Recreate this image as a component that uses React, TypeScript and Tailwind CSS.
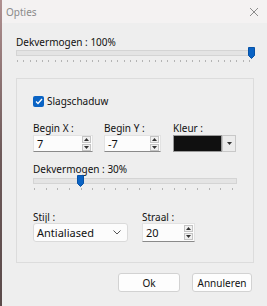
import React from "react";

const font = "font-['Noto_Sans',sans-serif]";
const txt = "text-[10px] leading-[12px] text-[#111111]";

function Thumb() {
  return (
    <svg width="7" height="12" viewBox="0 0 7 12">
      <path d="M0.5 0.5 H6.5 V8.5 L3.5 11.5 L0.5 8.5 Z" fill="#0a63c4" stroke="#0752a6" strokeWidth="1" />
    </svg>
  );
}

function Slider({ ticks, thumbLeft, width }: { ticks: number; thumbLeft: number; width: number }) {
  return (
    <div className="relative h-[16px]" style={{ width }}>
      <div className="absolute left-0 right-0 top-[3px] h-[6px] bg-[#e4e4e4] border border-[#d4d4d4]" />
      <div className="absolute top-0" style={{ left: thumbLeft }}>
        <Thumb />
      </div>
      <div className="absolute left-[1px] right-[4px] top-[13px] flex justify-between">
        {Array.from({ length: ticks }).map((_, i) => (
          <div key={i} className="w-px h-[2px] bg-[#b4b4b4]" />
        ))}
      </div>
    </div>
  );
}

function SpinArrows() {
  return (
    <div className="flex flex-col gap-px">
      <div className="w-[9px] h-[7px] border border-[#c4c4c4] bg-[#f0f0f0] flex items-center justify-center">
        <svg width="5" height="3" viewBox="0 0 5 3"><path d="M0 3 L2.5 0 L5 3 Z" fill="#333" /></svg>
      </div>
      <div className="w-[9px] h-[7px] border border-[#c4c4c4] bg-[#f0f0f0] flex items-center justify-center">
        <svg width="5" height="3" viewBox="0 0 5 3"><path d="M0 0 L2.5 3 L5 0 Z" fill="#333" /></svg>
      </div>
    </div>
  );
}

function Spin({ value, width, height }: { value: string; width: number; height: number }) {
  return (
    <div
      className="bg-[#fcfcfc] border border-[#e2e2e2] border-b-[#8a8a8a] flex items-center justify-between pl-[3px] pr-[1px]"
      style={{ width, height }}
    >
      <span className="text-[11px] leading-none text-[#111111]">{value}</span>
      <SpinArrows />
    </div>
  );
}

export default function App() {
  return (
    <div className={`w-[267px] h-[306px] flex bg-[#eeeeee] overflow-hidden ${font}`}>
      <div className="w-[2px] h-full bg-gradient-to-b from-[#b09090] via-[#6e5a5a] to-[#5a4a4a]" />
      <div className="flex-1 flex flex-col">
        {/* title bar */}
        <div className="h-[23px] flex items-center justify-between bg-[#f4f2f2] pl-[4px] pr-[8px]">
          <span className="text-[10px] text-[#8a8a8a] leading-none">Opties</span>
          <svg width="10" height="10" viewBox="0 0 10 10">
            <path d="M1 1 L9 9 M9 1 L1 9" stroke="#8c8c8c" strokeWidth="1" />
          </svg>
        </div>
        {/* body */}
        <div className="flex-1 flex flex-col pl-[14px] pr-[12px] pt-[13px]">
          <div className={txt}>Dekvermogen : 100%</div>
          <div className="mt-[-1px]">
            <Slider ticks={38} thumbLeft={232} width={238} />
          </div>
          {/* group box */}
          <div className="mt-[15px] w-[238px] h-[185px] border border-[#dcdcdc] flex flex-col pl-[16px] pt-[16px]">
            <div className="flex items-center gap-[3px]">
              <div className="w-[11px] h-[11px] rounded-[2px] bg-[#0a63c4] flex items-center justify-center">
                <svg width="8" height="7" viewBox="0 0 8 7"><path d="M1 3.5 L3 5.5 L7 1" stroke="white" strokeWidth="1.3" fill="none" /></svg>
              </div>
              <span className={txt}>Slagschaduw</span>
            </div>
            <div className="flex mt-[15px]">
              <div className="flex flex-col gap-[1px] w-[71px]">
                <span className={txt}>Begin X :</span>
                <Spin value="7" width={60} height={17} />
              </div>
              <div className="flex flex-col gap-[1px] w-[69px]">
                <span className={txt}>Begin Y :</span>
                <Spin value="-7" width={57} height={17} />
              </div>
              <div className="flex flex-col gap-[1px]">
                <span className={txt}>Kleur :</span>
                <div className="flex h-[17px]">
                  <div className="w-[49px] h-full bg-[#101010] border border-[#9a9a9a]" />
                  <div className="w-[14px] h-full bg-[#ececec] border border-[#c8c8c8] flex items-center justify-center">
                    <svg width="5" height="3" viewBox="0 0 5 3"><path d="M0 0 L2.5 3 L5 0 Z" fill="#333" /></svg>
                  </div>
                </div>
              </div>
            </div>
            <div className={`mt-[11px] ${txt}`}>Dekvermogen : 30%</div>
            <div>
              <Slider ticks={18} thumbLeft={44} width={204} />
            </div>
            <div className="flex mt-[20px]">
              <div className="flex flex-col w-[109px]">
                <span className={txt}>Stijl :</span>
                <div className="w-[95px] h-[19px] bg-[#fcfcfc] border border-[#dadada] rounded-[3px] flex items-center justify-between pl-[3px] pr-[6px]">
                  <span className="text-[11px] leading-none text-[#111111]">Antialiased</span>
                  <svg width="8" height="5" viewBox="0 0 8 5"><path d="M0.5 0.5 L4 4 L7.5 0.5" stroke="#555" strokeWidth="1" fill="none" /></svg>
                </div>
              </div>
              <div className="flex flex-col">
                <span className={txt}>Straal :</span>
                <Spin value="20" width={53} height={19} />
              </div>
            </div>
          </div>
          {/* buttons */}
          <div className="mt-[10px] flex justify-end gap-[12px] pr-[3px]">
            <button className="w-[62px] h-[19px] bg-[#fdfdfd] border border-[#d2d2d2] rounded-[3px] text-[10px] leading-none text-[#111111]">Ok</button>
            <button className="w-[60px] h-[19px] bg-[#fdfdfd] border border-[#d2d2d2] rounded-[3px] text-[10px] leading-none text-[#111111]">Annuleren</button>
          </div>
        </div>
      </div>
    </div>
  );
}
